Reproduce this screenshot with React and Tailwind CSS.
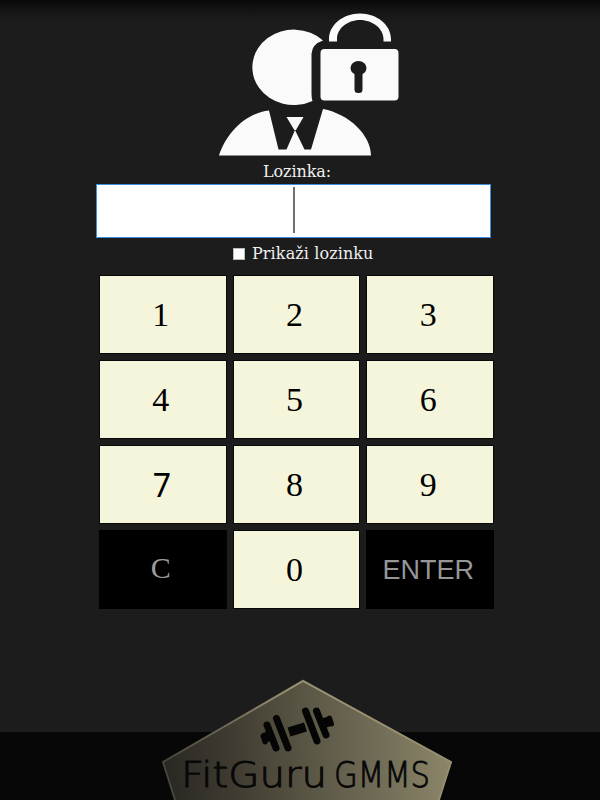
import React from "react";

const keys = ["1", "2", "3", "4", "5", "6", "7", "8", "9", "C", "0", "ENTER"];

function keyStyle(k) {
  if (k === "C") return "bg-black border-black text-[#9c9c9c] text-[30px] pb-1 font-['Liberation_Serif',serif]";
  if (k === "ENTER") return "bg-black border-black text-[#969696] text-[27px] pt-0.5 font-['Liberation_Sans',sans-serif]";
  if (k === "7") return "bg-[#f5f5dc] border-[#080808] text-black text-[32px] pl-0.5 font-['Noto_Sans',sans-serif]";
  return "bg-[#f5f5dc] border-[#080808] text-black text-[34px] font-['Liberation_Serif',serif]";
}

function UserLock() {
  return (
    <svg className="block h-[160px] w-full" viewBox="0 0 600 160">
      <g fill="#fafafa">
        <path d="M323 40.500A41.500 37.700 0 1 0 312.500 101Q311.500 98 311.500 94V54Q312 44 323 40.500Z" />
        <path d="M219 155.500C226 134 245 113 269 110.500L278.500 149.500H286.500L295 130L304.500 149.500H311L323 109C349 114 371 135 371 155.500Z" />
        <path d="M286.500 117H303.500L296 130H294.300Z" />
        <rect x="320.500" y="49" width="78" height="51.500" rx="4" />
        <path d="M329 41.500V39C329 25 343 13.500 360 13.500S391 25 391 39V41.500H383.500V39C383.500 29 373 20 360 20S337 29 337 39V41.500Z" />
      </g>
      <ellipse cx="358.500" cy="68" rx="8" ry="7" fill="#1c1c1c" />
      <rect x="354.500" y="69" width="8" height="24" rx="3.500" fill="#1c1c1c" />
    </svg>
  );
}

function Badge() {
  return (
    <svg className="block h-[130px] w-full" viewBox="0 670 600 130">
      <defs>
        <linearGradient id="metal" gradientUnits="userSpaceOnUse" x1="162" y1="760" x2="452" y2="740">
          <stop offset="0" stopColor="#292723" />
          <stop offset=".25" stopColor="#403c31" />
          <stop offset=".5" stopColor="#5a5645" />
          <stop offset=".75" stopColor="#716d57" />
          <stop offset="1" stopColor="#8d8769" />
        </linearGradient>
        <linearGradient id="edge" gradientUnits="userSpaceOnUse" x1="162" y1="0" x2="452" y2="0">
          <stop offset="0" stopColor="#45423a" />
          <stop offset=".45" stopColor="#9b9474" />
          <stop offset="1" stopColor="#958e70" />
        </linearGradient>
      </defs>
      <rect y="732" width="600" height="68" fill="#070707" />
      <path d="M162 762L303 679.500L452 762L439 800H175Z" fill="url(#metal)" />
      <path d="M175 800L163 762L303 681L451 762L439 800" fill="none" stroke="url(#edge)" strokeWidth="1.800" />
      <g stroke="#050505" strokeLinecap="round" fill="none">
        <path d="M267 725L276 748M276.500 718.500L288 748M305.500 711L317 741M316.500 711L326 735" strokeWidth="7" />
        <path d="M263.500 738L273 735M321 724L330.500 721" strokeWidth="10" strokeLinecap="butt" />
        <path d="M289 732L305.500 727" strokeWidth="9.500" strokeLinecap="butt" />
        <path d="M263 736L265 742M329.500 718L331.500 724" strokeWidth="5" />
      </g>
      <g fill="#080808" stroke="#080808" strokeWidth=".9" fontFamily="'DejaVu Sans', sans-serif" fontWeight="200" fontSize="35">
        <text x="181" y="787" textLength="146" lengthAdjust="spacingAndGlyphs">FitGuru</text>
        <text x="334" y="787" textLength="96" lengthAdjust="spacingAndGlyphs">GMMS</text>
      </g>
    </svg>
  );
}

export default function App() {
  return (
    <div className="flex h-[800px] w-[600px] flex-col overflow-hidden bg-[#1c1c1c] bg-[linear-gradient(#080808_0px,#141414_10px,#1c1c1c_22px)]">
      <UserLock />
      <main className="flex h-[510px] flex-col font-['DejaVu_Serif',serif]">
        <label className="flex h-6 w-[594px] items-center justify-center text-[16px] text-[#f0f0f0]">
          <span className="tracking-[-0.1px]">Lozinka:</span>
        </label>
        <div className="ml-24 flex h-[54px] w-[395px] items-center justify-center border border-[#3c8fdc] bg-white">
          <span className="-mt-0.5 ml-px h-[46px] w-0.5 bg-[#707070]" />
        </div>
        <div className="ml-[233px] flex h-[37px] items-center pb-[5px] text-[16px] text-[#f0f0f0]">
          <span className="mr-[7px] size-3 border border-[#bbb] bg-white" />
          <span className="whitespace-nowrap tracking-[0.1px]">Prikaži lozinku</span>
        </div>
        <div className="ml-[99px] grid w-[395px] grid-cols-3 gap-1.5">
          {keys.map((k) => (
            <button key={k} className={"flex h-[79px] items-center justify-center border pr-1 leading-none " + keyStyle(k)}>
              {k}
            </button>
          ))}
        </div>
      </main>
      <Badge />
    </div>
  );
}
